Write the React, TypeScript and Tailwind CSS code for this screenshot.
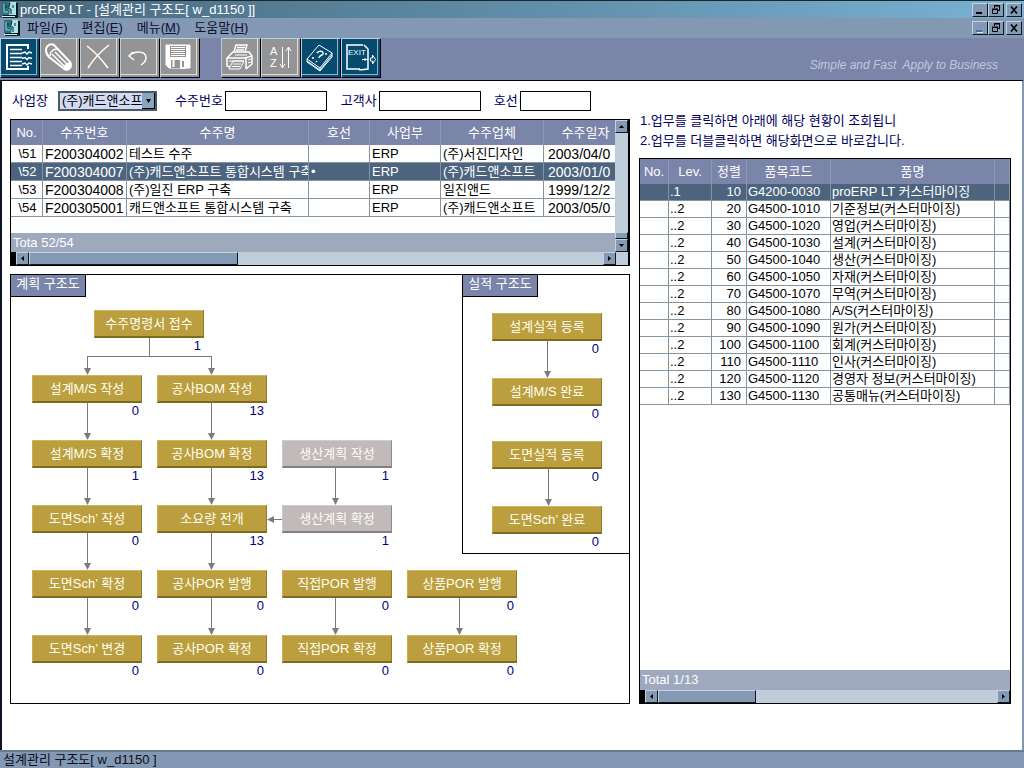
import type { ReactNode } from 'react';
import clsx from 'clsx';

type FlowNode = { label: string; count: number; x: number; y: number; disabled?: boolean };

const menus = [
  { name: '파일', key: 'F' },
  { name: '편집', key: 'E' },
  { name: '메뉴', key: 'M' },
  { name: '도움말', key: 'H' },
];

const orders = [
  { no: '\\51', code: 'F200304002', name: '테스트 수주', ship: '', dept: 'ERP', vendor: '(주)서진디자인', date: '2003/04/0' },
  { no: '\\52', code: 'F200304007', name: '(주)캐드앤소프트 통합시스템 구축', ship: '•', dept: 'ERP', vendor: '(주)캐드앤소프트', date: '2003/01/0' },
  { no: '\\53', code: 'F200304008', name: '(주)일진 ERP 구축', ship: '', dept: 'ERP', vendor: '일진앤드', date: '1999/12/2' },
  { no: '\\54', code: 'F200305001', name: '캐드앤소프트 통합시스템 구축', ship: '', dept: 'ERP', vendor: '(주)캐드앤소프트', date: '2003/05/0' },
];

const items = [
  { level: '.1', sort: 10, code: 'G4200-0030', name: 'proERP LT 커스터마이징' },
  { level: '..2', sort: 20, code: 'G4500-1010', name: '기준정보(커스터마이징)' },
  { level: '..2', sort: 30, code: 'G4500-1020', name: '영업(커스터마이징)' },
  { level: '..2', sort: 40, code: 'G4500-1030', name: '설계(커스터마이징)' },
  { level: '..2', sort: 50, code: 'G4500-1040', name: '생산(커스터마이징)' },
  { level: '..2', sort: 60, code: 'G4500-1050', name: '자재(커스터마이징)' },
  { level: '..2', sort: 70, code: 'G4500-1070', name: '무역(커스터마이징)' },
  { level: '..2', sort: 80, code: 'G4500-1080', name: 'A/S(커스터마이징)' },
  { level: '..2', sort: 90, code: 'G4500-1090', name: '원가(커스터마이징)' },
  { level: '..2', sort: 100, code: 'G4500-1100', name: '회계(커스터마이징)' },
  { level: '..2', sort: 110, code: 'G4500-1110', name: '인사(커스터마이징)' },
  { level: '..2', sort: 120, code: 'G4500-1120', name: '경영자 정보(커스터마이징)' },
  { level: '..2', sort: 130, code: 'G4500-1130', name: '공통매뉴(커스터마이징)' },
];

const planNodes: FlowNode[] = [
  { label: '수주명령서 접수', count: 1, x: 83, y: 35 },
  { label: '설계M/S 작성', count: 0, x: 21, y: 100 },
  { label: '공사BOM 작성', count: 13, x: 146, y: 100 },
  { label: '설계M/S 확정', count: 1, x: 21, y: 165 },
  { label: '공사BOM 확정', count: 13, x: 146, y: 165 },
  { label: '생산계획 작성', count: 1, x: 271, y: 165, disabled: true },
  { label: '도면Sch’ 작성', count: 0, x: 21, y: 230 },
  { label: '소요량 전개', count: 13, x: 146, y: 230 },
  { label: '생산계획 확정', count: 1, x: 271, y: 230, disabled: true },
  { label: '도면Sch’ 확정', count: 0, x: 21, y: 295 },
  { label: '공사POR 발행', count: 0, x: 146, y: 295 },
  { label: '직접POR 발행', count: 0, x: 271, y: 295 },
  { label: '상품POR 발행', count: 0, x: 396, y: 295 },
  { label: '도면Sch’ 변경', count: 0, x: 21, y: 360 },
  { label: '공사POR 확정', count: 0, x: 146, y: 360 },
  { label: '직접POR 확정', count: 0, x: 271, y: 360 },
  { label: '상품POR 확정', count: 0, x: 396, y: 360 },
];

const resultNodes: FlowNode[] = [
  { label: '설계실적 등록', count: 0, x: 29, y: 38 },
  { label: '설계M/S 완료', count: 0, x: 29, y: 103 },
  { label: '도면실적 등록', count: 0, x: 29, y: 166 },
  { label: '도면Sch’ 완료', count: 0, x: 29, y: 231 },
];

// [x, top, bottom] of every vertical connector
const planArrows = [
  [76, 81, 100], [200, 81, 100],
  [76, 128, 165], [200, 128, 165],
  [76, 193, 230], [200, 193, 230], [324, 193, 230],
  [76, 258, 295], [200, 258, 295],
  [76, 323, 360], [200, 323, 360], [324, 323, 360], [448, 323, 360],
];

const resultArrows = [[84, 66, 103], [85, 194, 231]];

const bevel = 'border border-t-[#c3d2e2] border-l-[#c3d2e2] border-b-[#101820] border-r-[#101820] bg-[#8399b4]';

function AppIcon() {
  return (
    <svg width="16" height="16" viewBox="0 0 16 16" className="shrink-0" aria-hidden="true">
      <rect x="1" y="1" width="15" height="15" fill="#0b1a22" />
      <rect x="0" y="0" width="14" height="13" fill="#2f6f80" />
      <path d="M8 0h6v13H7l1-5H6z" fill="#a9e4ea" />
      <path d="M2 2v8h4" stroke="#8fd0da" fill="none" />
      <path d="M8 1L6.500 7H9v5M4 3v3M11 3v3" stroke="#08252e" fill="none" />
      <path d="M0 14.500h13" stroke="#c5f1ee" />
    </svg>
  );
}

function WindowButtons({ dim }: { dim?: boolean }) {
  return (
    <div className="flex pr-[2px]">
      <button aria-label="최소화" className={clsx(bevel, 'h-[14px] w-4')}>
        <svg viewBox="0 0 14 12" className="block h-3 w-[14px]">
          <path d="M3 9h6" stroke={dim ? '#4f6ea0' : '#000'} strokeWidth="2" />
          {dim && <path d="M4 10.500h6" stroke="#dfe8f2" />}
        </svg>
      </button>
      <button aria-label="이전 크기로" className={clsx(bevel, 'h-[14px] w-4')}>
        <svg viewBox="0 0 14 12" className="block h-3 w-[14px]" fill="none" stroke="#000">
          <path d="M5.500 4V1.500h5v5H8M5 2h6M3.500 5.500h5v4h-5zM3 5h6" />
        </svg>
      </button>
      <button aria-label="닫기" className={clsx(bevel, 'ml-[2px] h-[14px] w-4')}>
        <svg viewBox="0 0 14 12" className="block h-3 w-[14px]">
          <path d="M4 2.500l6 7M10 2.500l-6 7" stroke="#000" strokeWidth="1.600" />
        </svg>
      </button>
    </div>
  );
}

function ToolButton({ label, active, children }: { label: string; active?: boolean; children: ReactNode }) {
  return (
    <button
      aria-label={label}
      className={clsx(
        'h-10 w-10 border border-t-[#b9cfdf] border-r-black border-b-black border-l-[#b9cfdf] pr-[2px] pb-[2px]',
        active ? 'bg-[#064a70]' : 'bg-[#949494]',
      )}
    >
      <span className={clsx('flex h-full w-full items-center justify-center border-r border-b', active ? 'border-[#8fb0c6]' : 'border-[#dcdee2]')}>
        <svg width="32" height="32" viewBox="0 0 32 32" fill="none" stroke="#fff">
          {children}
        </svg>
      </span>
    </button>
  );
}

function ArrowButton({ dir }: { dir: 'up' | 'down' | 'left' | 'right' }) {
  const shapes = {
    up: 'M3 7l2.500-3L8 7z',
    down: 'M3 4l2.500 3L8 4z',
    left: 'M7 3L4 5.500 7 8z',
    right: 'M4 3l3 2.500L4 8z',
  };
  return (
    <button aria-label={dir} className={clsx(bevel, 'h-[13px] w-[13px] shrink-0')}>
      <svg viewBox="0 0 11 11" className="block h-[11px] w-[11px]">
        <path d={shapes[dir]} />
      </svg>
    </button>
  );
}

function HScroll({ thumb, corner }: { thumb: string; corner?: boolean }) {
  return (
    <div className="flex h-[13px] bg-[#bfccd9]">
      <div className="w-[5px] bg-black" />
      <ArrowButton dir="left" />
      <div className={clsx(bevel, thumb)} />
      <div className="flex-1" />
      <ArrowButton dir="right" />
      {corner && <div className="w-3" />}
    </div>
  );
}

function Arrows({ lines, children }: { lines: number[][]; children?: ReactNode }) {
  return (
    <svg className="pointer-events-none absolute inset-0 h-full w-full" stroke="#7b7b7b" fill="none">
      {lines.map(([x, top, bottom]) => (
        <g key={`${x}-${top}`}>
          <path d={`M${x + 0.5} ${top}V${bottom - 5}`} />
          <path d={`M${x - 3} ${bottom - 7}h7l-3.500 7z`} fill="#7b7b7b" stroke="none" />
        </g>
      ))}
      {children}
    </svg>
  );
}

function Node({ node }: { node: FlowNode }) {
  return (
    <div className="absolute w-[110px]" style={{ left: node.x, top: node.y }}>
      <button
        className={clsx(
          'block h-7 w-full border border-b-2 leading-[26px] whitespace-nowrap text-[#fffdf0]',
          node.disabled
            ? 'border-t-[#d0cccc] border-r-[#8f8a8a] border-b-[#858080] border-l-[#cbc6c6] bg-[#c0baba]'
            : 'border-t-[#cdb662] border-r-[#907a2c] border-b-[#7f6a22] border-l-[#c8ae55] bg-[#bb9f3f]',
        )}
      >
        {node.label}
      </button>
      <div className="pr-[3px] text-right leading-4 text-[#000078]">{node.count}</div>
    </div>
  );
}

function PanelTitle({ children }: { children: ReactNode }) {
  return (
    <h2 className="h-[22px] w-[75px] border-r border-b border-black bg-[#7b84a9] text-center leading-[18px] whitespace-nowrap text-white">
      {children}
    </h2>
  );
}

function SearchForm() {
  const box = 'h-5 border border-black bg-white px-1 outline-none';
  return (
    <form className="flex h-5 items-center whitespace-nowrap text-[#000060]">
      <label htmlFor="site" className="w-12 pl-[2px]">사업장</label>
      <div className="relative h-5 w-[99px]">
        <select
          id="site"
          className="h-5 w-full appearance-none border-2 border-[#4b5a6b] bg-[#d3daf3] pr-3 pl-[2px] leading-4 text-black outline-none"
        >
          <option>(주)캐드앤소프트</option>
        </select>
        <span className="pointer-events-none absolute top-[2px] right-[2px] flex h-4 w-[13px] items-center justify-center border-r border-b border-black bg-[#8ba5bd]">
          <svg width="5" height="4" viewBox="0 0 5 4"><path d="M0 0h5L2.500 4z" /></svg>
        </span>
      </div>
      <label htmlFor="orderNo" className="pr-[2px] pl-[18px]">수주번호</label>
      <input id="orderNo" className={clsx(box, 'w-[102px]')} />
      <label htmlFor="client" className="pr-[2px] pl-[14px]">고객사</label>
      <input id="client" className={clsx(box, 'w-[102px]')} />
      <label htmlFor="ship" className="pr-[2px] pl-[13px]">호선</label>
      <input id="ship" className={clsx(box, 'w-[71px]')} />
    </form>
  );
}

function OrderGrid() {
  const th = 'h-[25px] border-r border-[#8f99ba] p-0 font-normal whitespace-nowrap';
  const td = 'h-[18px] overflow-hidden border-r border-b border-[#8494a0] py-0 pr-0 pl-[2px] leading-4 whitespace-nowrap';
  return (
    <div className="border border-r-2 border-black bg-white">
      <div className="flex">
        <div className="min-w-0 flex-1 overflow-hidden">
          <table className="w-full table-fixed border-separate border-spacing-0">
            <colgroup>
              <col className="w-8" />
              <col className="w-[84px]" />
              <col className="w-[182px]" />
              <col className="w-[61px]" />
              <col className="w-[71px]" />
              <col className="w-[103px]" />
              <col />
            </colgroup>
            <thead className="bg-[#7b84a9] text-white">
              <tr>
                {['No.', '수주번호', '수주명', '호선', '사업부', '수주업체'].map((h) => (
                  <th key={h} className={th}>{h}</th>
                ))}
                <th className="overflow-hidden p-0 pl-3 font-normal whitespace-nowrap">수주일자</th>
              </tr>
            </thead>
            <tbody>
              {orders.map((o, i) => (
                <tr key={o.no} className={i === 1 ? 'bg-[#4d647f] text-white' : 'text-black'}>
                  <td className={clsx(td, 'text-center')}>{o.no}</td>
                  <td className={clsx(td, 'text-sm')}>{o.code}</td>
                  <td className={td}>{o.name}</td>
                  <td className={td}>{o.ship}</td>
                  <td className={td}>{o.dept}</td>
                  <td className={td}>{o.vendor}</td>
                  <td className="overflow-hidden border-b border-[#8494a0] p-0 pl-1 text-sm leading-4 whitespace-nowrap">{o.date}</td>
                </tr>
              ))}
            </tbody>
          </table>
          <div className="mt-4 h-[19px] bg-[#9ea9be] pl-[2px] leading-[19px] text-white">Tota 52/54</div>
        </div>
        <div className="flex w-[13px] flex-col bg-[#bfccd9]">
          <ArrowButton dir="up" />
          <div className="flex-1" />
          <div className={clsx(bevel, 'h-[7px]')} />
          <ArrowButton dir="down" />
        </div>
      </div>
      <HScroll thumb="w-[209px]" corner />
    </div>
  );
}

function ItemGrid() {
  const th = 'h-[25px] border-r border-[#8f99ba] p-0 font-normal whitespace-nowrap';
  const td = 'h-[17px] overflow-hidden border-r border-b border-[#8494a0] py-0 pr-0 pl-px leading-4 whitespace-nowrap';
  return (
    <div className="flex flex-1 flex-col border border-black bg-white">
      <table className="w-full table-fixed border-separate border-spacing-0">
        <colgroup>
          <col className="w-[29px]" />
          <col className="w-[43px]" />
          <col className="w-[35px]" />
          <col className="w-[84px]" />
          <col />
          <col className="w-[15px]" />
        </colgroup>
        <thead className="bg-[#7b84a9] text-white">
          <tr>
            {['No.', 'Lev.', '정렬', '품목코드', '품명', ''].map((h) => (
              <th key={h} className={th}>{h}</th>
            ))}
          </tr>
        </thead>
        <tbody>
          {items.map((item, i) => (
            <tr key={item.code} className={i === 0 ? 'bg-[#4d647f] text-white' : 'text-black'}>
              <td className={td} />
              <td className={td}>{item.level}</td>
              <td className={td}>
                <div className="pr-[5px] text-right">{item.sort}</div>
              </td>
              <td className={td}>{item.code}</td>
              <td className={td}>{item.name}</td>
              <td className={td} />
            </tr>
          ))}
        </tbody>
      </table>
      <div className="flex-1" />
      <div className="h-5 bg-[#9ea9be] pl-[2px] leading-5 text-white">Total 1/13</div>
      <HScroll thumb="w-[98px]" />
    </div>
  );
}

function Toolbar() {
  return (
    <div className="flex h-[42px] bg-[#7b84a9]">
      <ToolButton label="조회" active>
        <path d="M25 8V4H4v24h21v-3" strokeWidth="2" />
        <path d="M7 8.500h12M7 12.500h12M7 16.500h12M7 20.500h12M7 24.500h12" strokeWidth="1.500" />
        <path d="M19 12l3-1 2 2 2-2 3 1M19 17.500l3-1 2 2 2-2 3 1M19 23l3-1 2 2 2-2 3 1" strokeWidth="1.500" />
      </ToolButton>
      <ToolButton label="수정">
        <path d="M3 9c0-4 4-7 8-5l16 17c2 2 1 6-1 7-2 1-4 1-6-1L6 16c-2-2-3-4-3-7z" strokeWidth="2" />
        <path d="M7 15c0-4 3-7 7-7M9 13l14 14M12 11l14 14" strokeWidth="1.500" />
        <path d="M21 27c0-3 2-5 6-5v5l-3 2z" fill="#fff" />
      </ToolButton>
      <ToolButton label="삭제">
        <path d="M4 5c7 5 15 14 21 22M26 4C18 10 10 19 5 27" strokeWidth="1.500" />
      </ToolButton>
      <ToolButton label="실행취소">
        <path d="M10 11l-4 4 5 4M6 15c5-5 17-6 17 2 0 3-2 5-5 7" strokeWidth="1.500" />
      </ToolButton>
      <ToolButton label="저장">
        <path d="M3 4h24v23H6l-3-3z" fill="#fff" />
        <path d="M7 5h16v11H7z" fill="#949494" stroke="none" />
        <path d="M8 6.500h14M8 8.500h14M8 10.500h14M8 12.500h14M8 14.500h14" />
        <path d="M8 19h14v8H8z" fill="#949494" stroke="none" />
        <path d="M10.500 19v7M18 19h4v8h-4z" strokeWidth="2" />
      </ToolButton>
      <div className="w-[21px]" />
      <ToolButton label="인쇄">
        <path d="M10 11l2-7h11l-2 7M13 6.500h8M12 9h8M3 17l6-6h16l3 4v8l-6 5M3 17v8l3 1M3 17h18l7-2M22 17v11" strokeWidth="1.500" />
        <path d="M5 20h15M9 20l-4 8h11l4-8zM9 23h8M8 25.500h8M11 14h12M24 19l3-1M24 22l3-1" />
      </ToolButton>
      <ToolButton label="정렬">
        <text x="6" y="14" fontSize="11" fill="#fff" stroke="none">A</text>
        <text x="6" y="26" fontSize="11" fill="#fff" stroke="none">Z</text>
        <path d="M18.500 6v20M16 23l2.500 4 2.500-4M24.500 27V7M22 10l2.500-4 2.500 4" />
      </ToolButton>
      <ToolButton label="도움말" active>
        <path d="M3 18L15 4l13 8-12 15zM3 18v3l13 9v-3M16 30l12-14v-4M3 20l13 9 12-15" />
        <path d="M13 12c2-3 7-2 6 1-1 2-4 1-4 4M12 20l1 1M8 17h2M21 13h2" strokeWidth="1.500" />
      </ToolButton>
      <ToolButton label="종료" active>
        <path d="M19 4H3v24h13M16 28v1l8-1V8l-4-4" strokeWidth="1.500" />
        <text x="4" y="14" fontSize="8" fill="#fff" stroke="none">EXIT</text>
        <path d="M18 18.500h6M21 17v3" />
        <path d="M26.500 17h2v-3l3 4.500-3 4.500v-3h-2z" />
      </ToolButton>
      <p className="flex-1 self-center pt-3 pr-[26px] text-right text-xs whitespace-pre text-[#c3c7dd] italic">
        Simple and Fast  Apply to Business
      </p>
    </div>
  );
}

export default function App() {
  return (
    <div className="flex min-h-screen flex-col bg-white font-['Liberation_Sans','Noto_Sans_CJK_KR',sans-serif] text-[13px] leading-4">
      <header>
        <div className="flex h-[18px] items-center justify-between border-t border-[#182830] bg-linear-to-r from-[#48697f] to-[#79b2d2]">
          <h1 className="flex items-center gap-[2px] pl-[2px] whitespace-nowrap text-white">
            <AppIcon />
            proERP LT - [설계관리 구조도[ w_d1150 ]]
          </h1>
          <WindowButtons />
        </div>
        <div className="flex h-5 items-center justify-between bg-[#8398b3]">
          <nav className="flex items-center gap-[7px] pl-1 text-[#0b0f30]">
            <AppIcon />
            <div className="flex gap-[14px]">
              {menus.map((m) => (
                <button key={m.key} className="whitespace-nowrap">
                  {m.name}(<u>{m.key}</u>)
                </button>
              ))}
            </div>
          </nav>
          <WindowButtons dim />
        </div>
        <Toolbar />
      </header>

      <main className="grid flex-1 grid-cols-[5fr_3fr] gap-[9px] border-t border-r-2 border-l-2 border-t-black border-r-[#8398b3] border-l-[#0b1420] pt-[10px] pr-[11px] pb-[46px] pl-2">
        <div className="flex min-w-0 flex-col gap-2">
          <SearchForm />
          <OrderGrid />
          <section className="relative flex flex-1 items-start justify-between border border-black">
            <PanelTitle>계획 구조도</PanelTitle>
            <Arrows lines={planArrows}>
              <path d="M138.500 63v18M76 81.500h125" />
              <path d="M271 244.500h-10" />
              <path d="M256 244.500l7-3.500v7z" fill="#7b7b7b" stroke="none" />
            </Arrows>
            {planNodes.map((n) => <Node key={n.label} node={n} />)}

            <section className="relative h-[279px] w-[167px] border-b border-l border-black">
              <PanelTitle>실적 구조도</PanelTitle>
              <Arrows lines={resultArrows} />
              {resultNodes.map((n) => <Node key={n.label} node={n} />)}
            </section>
          </section>
        </div>

        <div className="flex min-w-0 flex-col gap-[7px] pt-5">
          <div className="pl-px leading-5 whitespace-nowrap text-[#000060]">
            <p>1.업무를 클릭하면 아래에 해당 현황이 조회됩니</p>
            <p>2.업무를 더블클릭하면 해당화면으로 바로갑니다.</p>
          </div>
          <ItemGrid />
        </div>
      </main>

      <footer className="h-[18px] border-t-2 border-[#647d92] bg-[#8398b3] pl-[3px] leading-4 text-[#0b0f20]">
        설계관리 구조도[ w_d1150 ]
      </footer>
    </div>
  );
}
